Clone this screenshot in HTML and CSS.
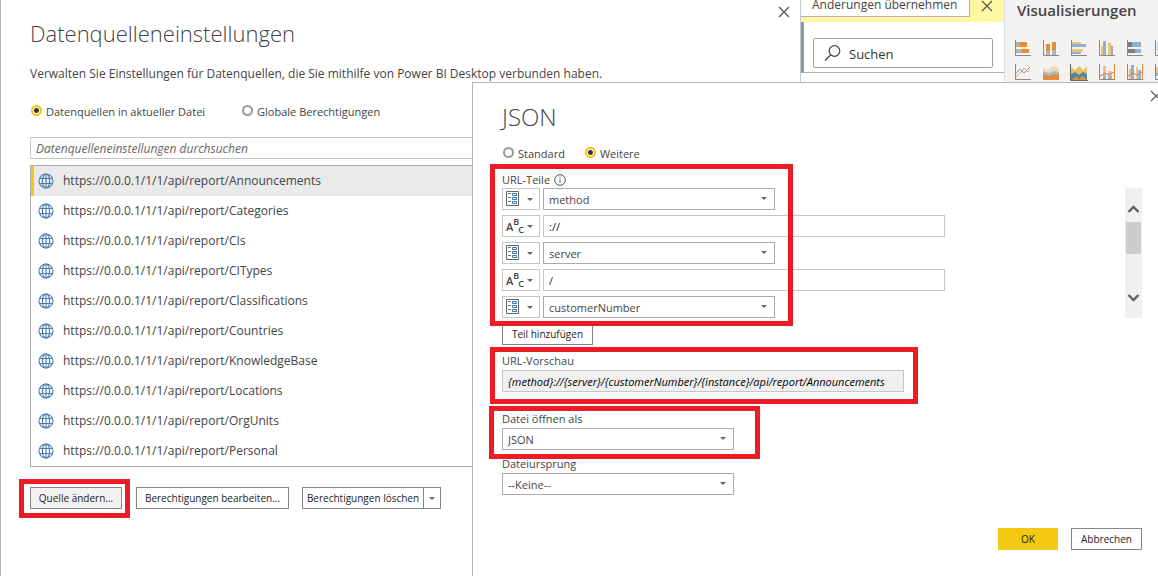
FILE: index.html
```html
<!DOCTYPE html>
<html lang="de">
<head>
<meta charset="utf-8">
<title>Datenquelleneinstellungen</title>
<link rel="stylesheet" href="styles.css">
</head>
<body>
<svg class="defs" aria-hidden="true">
  <symbol id="globe" viewBox="0 0 16 16"><g fill="none" stroke="#4a7db3" stroke-width="1.1"><circle cx="8" cy="8" r="7"/><ellipse cx="8" cy="8" rx="3.6" ry="7"/><path d="M8 1v14M1.500 5.500h13M1.500 10.500h13"/></g></symbol>
  <symbol id="close" viewBox="0 0 12 12"><path d="M1 1l10 10M11 1L1 11" fill="none" stroke="#555" stroke-width="1.2"/></symbol>
  <symbol id="param" viewBox="0 0 14 16"><path d="M.5.5h12v14H.5z" fill="#fff" stroke="#666"/><path d="M2 2.500h3M2 6.500h3M2 10.500h3" stroke="#777"/><path d="M6.500 2.500h4v2h-4zM6.500 6.500h4v2h-4zM6.500 10.500h4v2h-4z" fill="#fff" stroke="#3a78b5"/></symbol>
</svg>

<div class="desktop">
  <section class="filters">
    <div class="notice">
      <button class="apply">Änderungen übernehmen</button>
      <button class="icon-btn" aria-label="Hinweis schließen"><svg width="12" height="12"><use href="#close"/></svg></button>
    </div>
    <div class="filter-body">
      <label class="find">
        <svg width="18" height="18" viewBox="0 0 18 18" fill="none" stroke="#444" stroke-width="1.2"><circle cx="10.500" cy="7" r="5.300"/><path d="M6.500 11L1 16.500"/></svg>
        <input type="text" placeholder="Suchen" aria-label="Suchen">
      </label>
    </div>
  </section>
  <section class="visuals">
    <h2>Visualisierungen</h2>
    <div class="charts">
      <svg viewBox="0 0 16 16"><path d="M5 2h7v5H5zM7 9h7v4H7z" fill="#e68a3e"/><path d="M1 2h4v5H1zM1 9h6v4H1z" fill="#b3b1af"/><path d="M.5 0v15.500H16" fill="none" stroke="#8a8886"/></svg>
      <svg viewBox="0 0 16 16"><path d="M3 4h4v7H3zM9 2h4v8H9z" fill="#e68a3e"/><path d="M3 11h4v4H3zM9 10h4v5H9z" fill="#b3b1af"/><path d="M.5 0v15.500H16" fill="none" stroke="#8a8886"/></svg>
      <svg viewBox="0 0 16 16"><path d="M1 2h9v2H1zM1 9h11v3H1z" fill="#ebc57c"/><path d="M1 4h14v3H1zM1 12h9v2H1z" fill="#8db0d3"/><path d="M.5 0v15.500H16" fill="none" stroke="#8a8886"/></svg>
      <svg viewBox="0 0 16 16"><path d="M2 6h2v9H2zM9 3h3v12H9z" fill="#ebc57c"/><path d="M4 1h3v14H4zM12 6h2v9h-2z" fill="#8db0d3"/><path d="M.5 0v15.500H16" fill="none" stroke="#8a8886"/></svg>
      <svg viewBox="0 0 16 16"><path d="M1 2h4v5H1zM1 9h7v4H1z" fill="#7f7d7b"/><path d="M5 2h9v5H5zM8 9h6v4H8z" fill="#8db0d3"/><path d="M.5 0v15.500H16" fill="none" stroke="#8a8886"/></svg>
      <svg viewBox="0 0 16 16"><path d="M2 2h4v8H2z" fill="#b9cfe0"/><path d="M.5 0v15.500H16" fill="none" stroke="#8a8886"/></svg>
      <svg viewBox="0 0 16 16"><path d="M1 9l4-4 4 4 6-6" fill="none" stroke="#6d9bc9"/><path d="M1 13l5-5 3-4 4 4 2-2" fill="none" stroke="#e79a85"/><path d="M.5 0v15.500H16" fill="none" stroke="#8a8886"/></svg>
      <svg viewBox="0 0 16 16"><path d="M0 4l5 2 5-4 6 2v6H0z" fill="#f3d9b4"/><path d="M0 7l6 2 5-2 5 1v4H0z" fill="#9fc0d2"/><path d="M0 10l6 2 5-2h5v6H0z" fill="#e68a3e"/></svg>
      <svg class="wide" viewBox="0 0 18 17"><path d="M1 3l4 3 4-4 4 4 4-3v9H1z" fill="#ebc160"/><path d="M1 10l4-2 4 3 4-3 4 2v6H1z" fill="#4f86a3"/><path d="M2 16l4-4 3 3 4-3 4 4z" fill="#e68a3e"/><path d="M.5 0v16.500H18" fill="none" stroke="#666"/></svg>
      <svg viewBox="0 0 16 16"><path d="M4 2h3v8H4zM9 7h4v5H9z" fill="#f0bd98"/><path d="M4 10h3v5H4zM9 12h4v3H9z" fill="#b3b1af"/><path d="M1 12l5-3 4 2 5-3" fill="none" stroke="#e0735b"/><path d="M.5 0v15.500H16" fill="none" stroke="#8a8886"/><path d="M15.500 0v15" stroke="#e68a3e"/></svg>
      <svg viewBox="0 0 16 16"><path d="M2 5h2v10H2zM9 3h2v12H9z" fill="#ebc57c"/><path d="M4 1h3v14H4zM11 6h3v9h-3z" fill="#8db0d3"/><path d="M1 12l5-3 4 2 5-3" fill="none" stroke="#e0735b"/><path d="M.5 0v15.500H16" fill="none" stroke="#8a8886"/><path d="M15.500 0v15" stroke="#e68a3e"/></svg>
      <svg viewBox="0 0 16 16"><path d="M1 3h4v6H1z" fill="#ebc57c"/><path d="M1 9h4v3H1z" fill="#8db0d3"/><path d="M.5 0v15.500H16" fill="none" stroke="#8a8886"/></svg>
    </div>
  </section>

  <section class="window sources" role="dialog" aria-labelledby="t1">
    <button class="icon-btn window-close" aria-label="Schließen"><svg width="12" height="12"><use href="#close"/></svg></button>
    <h1 id="t1">Datenquelleneinstellungen</h1>
    <p class="intro">Verwalten Sie Einstellungen für Datenquellen, die Sie mithilfe von Power BI Desktop verbunden haben.</p>
    <div class="radios scope">
      <label><input type="radio" name="scope" checked><span>Datenquellen in aktueller Datei</span></label>
      <label><input type="radio" name="scope"><span>Globale Berechtigungen</span></label>
    </div>
    <input class="field search" type="text" placeholder="Datenquelleneinstellungen durchsuchen" aria-label="Datenquelleneinstellungen durchsuchen">
    <ul class="list" role="listbox" aria-label="Datenquellen">
      <li class="selected" role="option" aria-selected="true"><svg><use href="#globe"/></svg>https://0.0.0.1/1/1/api/report/Announcements</li>
      <li role="option"><svg><use href="#globe"/></svg>https://0.0.0.1/1/1/api/report/Categories</li>
      <li role="option"><svg><use href="#globe"/></svg>https://0.0.0.1/1/1/api/report/CIs</li>
      <li role="option"><svg><use href="#globe"/></svg>https://0.0.0.1/1/1/api/report/CITypes</li>
      <li role="option"><svg><use href="#globe"/></svg>https://0.0.0.1/1/1/api/report/Classifications</li>
      <li role="option"><svg><use href="#globe"/></svg>https://0.0.0.1/1/1/api/report/Countries</li>
      <li role="option"><svg><use href="#globe"/></svg>https://0.0.0.1/1/1/api/report/KnowledgeBase</li>
      <li role="option"><svg><use href="#globe"/></svg>https://0.0.0.1/1/1/api/report/Locations</li>
      <li role="option"><svg><use href="#globe"/></svg>https://0.0.0.1/1/1/api/report/OrgUnits</li>
      <li role="option"><svg><use href="#globe"/></svg>https://0.0.0.1/1/1/api/report/Personal</li>
    </ul>
    <div class="actions">
      <div class="marked mark-change"><button class="btn change">Quelle ändern...</button></div>
      <button class="btn edit">Berechtigungen bearbeiten...</button>
      <div class="split"><button class="btn clear">Berechtigungen löschen</button><button class="btn more" aria-label="Weitere Optionen"><span class="arrow"></span></button></div>
    </div>
  </section>

  <section class="window json" role="dialog" aria-labelledby="t2">
    <button class="icon-btn window-close" aria-label="Schließen"><svg width="12" height="12"><use href="#close"/></svg></button>
    <h1 id="t2">JSON</h1>
    <div class="radios mode">
      <label><input type="radio" name="mode"><span>Standard</span></label>
      <label><input type="radio" name="mode" checked><span>Weitere</span></label>
    </div>
    <div class="parts">
      <div class="part-list">
        <div class="caption">URL-Teile <svg width="12" height="12" viewBox="0 0 12 12" fill="none" stroke="#555"><circle cx="6" cy="6" r="5.300"/><path d="M6 5v4M6 2.800v1.200"/></svg></div>
        <div class="part"><button class="kind" aria-label="Parameter"><svg width="14" height="16"><use href="#param"/></svg><span class="arrow"></span></button><span class="drop"><select aria-label="URL-Teil 1"><option>method</option></select></span></div>
        <div class="part"><button class="kind" aria-label="Text"><span class="abc">A<sup>B</sup><sub>C</sub></span><span class="arrow"></span></button><input class="field" type="text" value="://" aria-label="URL-Teil 2"></div>
        <div class="part"><button class="kind" aria-label="Parameter"><svg width="14" height="16"><use href="#param"/></svg><span class="arrow"></span></button><span class="drop"><select aria-label="URL-Teil 3"><option>server</option></select></span></div>
        <div class="part"><button class="kind" aria-label="Text"><span class="abc">A<sup>B</sup><sub>C</sub></span><span class="arrow"></span></button><input class="field" type="text" value="/" aria-label="URL-Teil 4"></div>
        <div class="part"><button class="kind" aria-label="Parameter"><svg width="14" height="16"><use href="#param"/></svg><span class="arrow"></span></button><span class="drop"><select aria-label="URL-Teil 5"><option>customerNumber</option></select></span></div>
      </div>
      <div class="scrollbar" aria-hidden="true">
        <svg width="13" height="10" viewBox="0 0 13 10"><path d="M1.500 8l5-5 5 5" fill="none" stroke="#606060" stroke-width="2.400"/></svg>
        <div class="thumb"></div>
        <svg class="down" width="13" height="10" viewBox="0 0 13 10"><path d="M1.500 2l5 5 5-5" fill="none" stroke="#606060" stroke-width="2.400"/></svg>
      </div>
    </div>
    <button class="btn add">Teil hinzufügen</button>
    <div class="group preview marked">
      <label for="preview">URL-Vorschau</label>
      <input id="preview" class="field" type="text" readonly value="{method}://{server}/{customerNumber}/{instance}/api/report/Announcements">
    </div>
    <div class="group open-as marked">
      <label for="open">Datei öffnen als</label>
      <span class="drop"><select id="open"><option>JSON</option></select></span>
    </div>
    <div class="group origin">
      <label for="origin">Dateiursprung</label>
      <span class="drop"><select id="origin"><option>--Keine--</option></select></span>
    </div>
    <div class="footer">
      <button class="btn ok">OK</button>
      <button class="btn cancel">Abbrechen</button>
    </div>
  </section>
</div>
</body>
</html>
```
FILE: styles.css
```css
*, *::before, *::after { box-sizing: border-box; }
body { margin: 0; background: #fff; color: #444; font: 12px/20px "Open Sans", "Noto Sans", sans-serif; }
button, input, select { font: inherit; color: inherit; margin: 0; }
button { padding: 0; }
h1, h2, p, ul { margin: 0; padding: 0; }
.defs { display: none; }

.desktop { position: relative; min-height: 100vh; overflow: hidden; display: flex; justify-content: flex-end; }
.icon-btn { display: flex; background: none; border: 0; }

/* report panes behind the dialogs */
.filters { width: 204px; height: 84px; }
.notice { display: flex; align-items: flex-start; height: 22px; background: #fff6a3; }
.apply { width: 170px; height: 17px; border: 1px solid #b3b1af; border-top: 0; background: #fff; line-height: 10px; padding: 0 0 6px 11px; text-align: left; white-space: nowrap; }
.notice .icon-btn { margin-left: 11px; }
.filter-body { height: 51px; padding: 16px 12px 12px 9px; border-left: 4px solid #7f9fa8; border-bottom: 1px solid #b3b1af; }
.find { display: flex; align-items: center; gap: 5px; width: 180px; height: 30px; padding-left: 10px; border: 1px solid #a19f9d; border-radius: 2px; }
.find input { width: 130px; border: 0; outline: 0; padding: 4px 2px 2px; background: none; font-size: 13px; }
.find input::placeholder { color: #333; opacity: 1; }
.visuals { width: 154px; height: 84px; padding-left: 10px; overflow: hidden; background: #f3f2f1; border-left: 1px solid #e1dfdd; }
.visuals h2 { font-size: 15px; line-height: 20px; font-weight: 600; padding-left: 2px; }
.charts { display: grid; grid-template-columns: repeat(6, 16px); gap: 8px 12px; margin-top: 20px; }
.charts svg { width: 16px; height: 16px; }
.charts .wide { width: 18px; height: 17px; margin-left: -1px; }

/* dialogs */
.window { position: absolute; background: #fff; }
.window h1 { font-size: 22px; font-weight: 300; }
.window-close { position: absolute; }
.sources { left: 0; top: 0; bottom: 0; width: 801px; padding: 16px 30px 0 29px; border-left: 1px solid #b5b5b5; border-right: 1px solid #c8c8c8; }
.sources .window-close { right: 10px; top: 6px; }
.sources h1 { line-height: 34px; }
.intro { margin-top: 14px; }
.json { left: 472px; right: 0; top: 82px; bottom: 0; padding: 18px 16px 0 29px; border-left: 1px solid #b5b5b5; border-top: 1px solid #b5b5b5; }
.json .window-close { right: -4px; top: 7px; }
.json h1 { line-height: 32px; font-size: 24px; }

.radios { display: flex; height: 20px; font-size: 11px; line-height: 22px; }
.radios label { display: flex; gap: 4px; }
.radios input { appearance: none; width: 11px; height: 11px; margin: 4px 0 0; border: 2px solid #999; border-radius: 50%; background: #fff; }
.radios input:checked { border-color: #f0c419; background: radial-gradient(circle, #333 0 2px, #fff 3px); }
.scope { margin-top: 17px; gap: 36px; }
.scope label { padding-left: 1px; }
.mode { margin-top: 10px; gap: 19px; }
.mode label { padding-left: 1px; }

.field, select { height: 22px; padding: 1px 5px 0; border: 1px solid #c6c6c6; border-radius: 0; background: #fff; outline: 0; font-size: 11px; }
.field { color: #222; }
.search { display: block; width: 100%; margin-top: 16px; font-style: italic; font-size: 12px; }
.search::placeholder { color: #666; opacity: 1; }
.list { list-style: none; margin-top: 6px; border: 1px solid #ababab; }
.list li { display: flex; align-items: center; gap: 9px; height: 30px; padding-left: 7px; line-height: 30px; }
.list svg { width: 16px; height: 16px; }
.list .selected { background: #eaeaea; border-left: 3px solid #f2c811; padding-left: 4px; }

.btn { height: 22px; border: 1px solid #858585; background: #fff; font-size: 10px; line-height: 20px; color: #222; white-space: nowrap; }
.arrow, .drop::after { width: 6px; height: 3px; border: 3px solid transparent; border-top-color: #666; border-bottom: 0; }
.actions { display: flex; margin-top: 20px; }
.change { width: 92px; background: #f3f2f1; }
.edit { width: 153px; margin-left: 14px; }
.split { display: flex; margin-left: 13px; }
.clear { width: 122px; }
.more { display: flex; width: 18px; margin-left: -1px; align-items: center; justify-content: center; }

/* red outlines laid over the steps to follow */
.marked, .part-list { position: relative; }
.marked::after, .part-list::after { content: ""; position: absolute; border: 5px solid #ed1c24; pointer-events: none; z-index: 1; }
.mark-change::after { inset: -8px -8px -9px -11px; }
.part-list::after { top: -7px; bottom: -8px; left: -12px; width: 303px; }
.preview::after { inset: -6px -14px -12px -12px; }
.open-as::after { inset: -5px -26px -9px -13px; }

.caption, .group label { display: block; height: 17px; line-height: 16px; font-size: 11px; }
.caption { display: flex; align-items: center; gap: 4px; }
.parts { display: flex; justify-content: space-between; margin-top: 8px; }
.part-list { display: flex; flex-direction: column; width: 443px; }
.part { display: flex; gap: 3px; }
.part + .part { margin-top: 5px; }
.part .field { flex: 1; }
.kind { display: flex; align-items: center; justify-content: space-between; width: 38px; height: 22px; padding: 0 6px 0 3px; border: 1px solid #c6c6c6; background: #fff; }
.abc { display: flex; align-items: flex-start; height: 20px; font-size: 11px; line-height: 22px; font-weight: 600; }
.abc sup { font-size: 9px; line-height: 12px; }
.abc sub { font-size: 9px; line-height: 28px; margin-left: -1px; }
.drop { position: relative; display: block; width: 232px; }
.drop select { appearance: none; display: block; width: 100%; border-color: #ababab; }
.drop::after { content: ""; position: absolute; right: 8px; top: 9px; }
.scrollbar { display: flex; flex-direction: column; align-items: center; width: 17px; margin-top: 17px; padding: 16px 0 15px; background: #f0f0f0; }
.thumb { width: 15px; height: 32px; margin-top: 8px; background: #cdcdcd; }
.down { margin-top: auto; }
.add { display: block; width: 91px; margin-top: 5px; }
.group { width: 232px; }
.preview { width: 402px; margin-top: 8px; }
.preview .field { display: block; width: 100%; background: #f0f0f0; font-style: italic; color: #000; }
.open-as { margin-top: 19px; }
.origin { margin-top: 6px; }
.footer { display: flex; justify-content: flex-end; gap: 13px; margin-top: 33px; }
.ok { width: 60px; border-color: #f2c811; background: #f2c811; }
.cancel { width: 71px; }
```
